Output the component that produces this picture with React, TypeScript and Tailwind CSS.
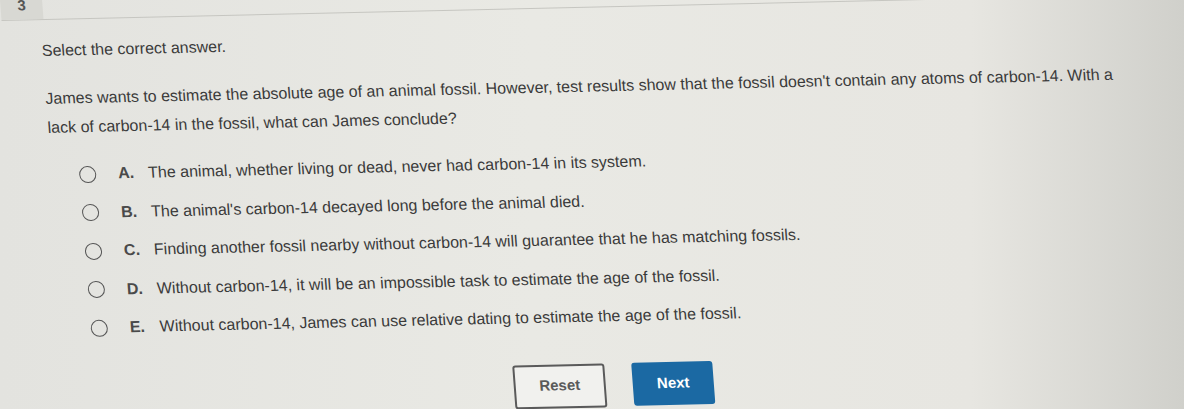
import { useState } from "react";

const choices = [
  { key: "A", text: "The animal, whether living or dead, never had carbon-14 in its system." },
  { key: "B", text: "The animal's carbon-14 decayed long before the animal died." },
  { key: "C", text: "Finding another fossil nearby without carbon-14 will guarantee that he has matching fossils." },
  { key: "D", text: "Without carbon-14, it will be an impossible task to estimate the age of the fossil." },
  { key: "E", text: "Without carbon-14, James can use relative dating to estimate the age of the fossil." },
];

export default function App() {
  const [selected, setSelected] = useState<string | null>(null);

  return (
    <div className="h-[409px] w-full overflow-hidden bg-[linear-gradient(to_right,#e3e3df_0%,#e9e9e4_45%,#e7e6e1_82%,#d0d0cb_100%)] font-['Liberation_Sans',Arial,sans-serif] text-[#3a3a3a]">
      {/* the photo is slightly tilted, so the whole sheet is too */}
      <div className="origin-top-left -rotate-[1.3deg] skew-x-[3deg]">
        <div className="flex h-[21px] border-b border-[#c6c6c1]">
          <div className="flex w-[42px] justify-center overflow-hidden bg-[#d8d8d3]">
            <span className="-mt-[3px] text-[15px] leading-[18px] font-bold text-[#555]">3</span>
          </div>
        </div>

        <div className="pl-[38px]">
          <p className="mt-[19px] text-[16px] leading-[24px]">Select the correct answer.</p>

          <p className="mt-[21px] max-w-[1090px] text-[16px] leading-[29px]">
            James wants to estimate the absolute age of an animal fossil. However, test results show that the fossil
            doesn't contain any atoms of carbon-14. With a lack of carbon-14 in the fossil, what can James conclude?
          </p>

          <div className="mt-[14px] flex flex-col pl-[28px]">
            {choices.map((c) => (
              <label key={c.key} className="flex h-[38.5px] cursor-pointer items-center" onClick={() => setSelected(c.key)}>
                <span className="flex h-[17px] w-[17px] items-center justify-center rounded-full border-[1.5px] border-[#555]">
                  {selected === c.key && <span className="h-[9px] w-[9px] rounded-full bg-[#1b69a3]" />}
                </span>
                <span className="ml-[22px] w-[30px] text-[16px] font-bold text-[#4a4a4a]">{c.key}.</span>
                <span className="text-[16px]">{c.text}</span>
              </label>
            ))}
          </div>
        </div>

        <div className="mt-[27px] flex justify-center gap-[27px] pr-[16px]">
          <button
            className="h-[44px] w-[92px] rounded-[3px] border-2 border-[#5a5a5a] bg-[#f1f1ee] text-[15px] font-bold text-[#5a5a5a]"
            onClick={() => setSelected(null)}
          >
            Reset
          </button>
          <button className="h-[43px] w-[81px] rounded-[3px] bg-[#1b69a3] text-[15px] font-bold text-white">Next</button>
        </div>
      </div>
    </div>
  );
}
